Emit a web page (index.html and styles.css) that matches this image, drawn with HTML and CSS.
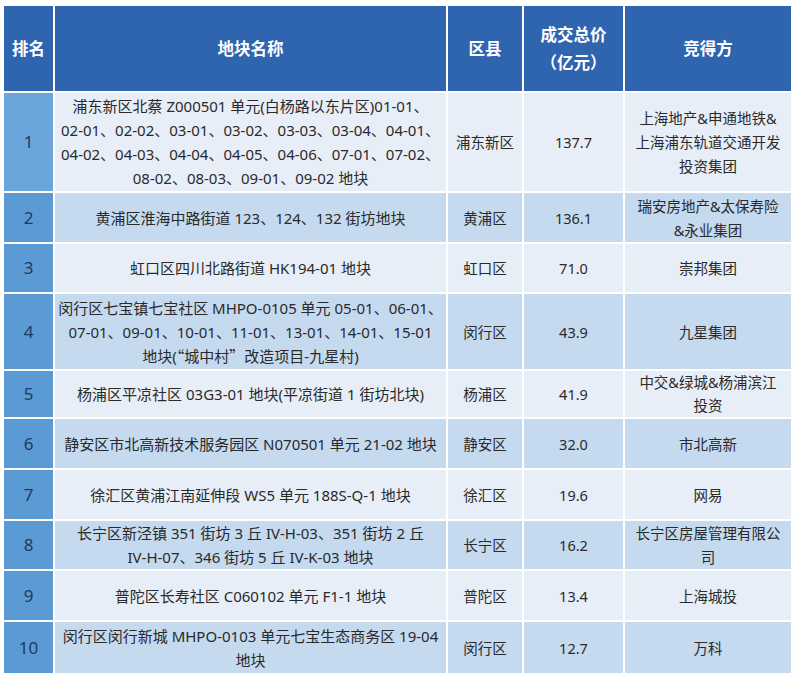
FILE: index.html
```html
<!DOCTYPE html>
<html lang="zh">
<head>
<meta charset="utf-8">
<link rel="stylesheet" href="styles.css">
</head>
<body>
<table class="land">
  <colgroup>
    <col class="c-rank"><col class="c-name"><col class="c-dist"><col class="c-price"><col class="c-win">
  </colgroup>
  <thead>
    <tr class="head">
      <th class="h-rank">排名</th>
      <th>地块名称</th>
      <th>区县</th>
      <th>成交总价<br>（亿元）</th>
      <th>竞得方</th>
    </tr>
  </thead>
  <tbody>
    <tr class="odd r1">
      <td class="rank">1</td>
      <td class="name">浦东新区北蔡 Z000501 单元(白杨路以东片区)01-01、<br>02-01、02-02、03-01、03-02、03-03、03-04、04-01、<br>04-02、04-03、04-04、04-05、04-06、07-01、07-02、<br>08-02、08-03、09-01、09-02 地块</td>
      <td>浦东新区</td>
      <td>137.7</td>
      <td>上海地产&amp;申通地铁&amp;<br>上海浦东轨道交通开发<br>投资集团</td>
    </tr>
    <tr class="even r2">
      <td class="rank">2</td>
      <td class="name">黄浦区淮海中路街道 123、124、132 街坊地块</td>
      <td>黄浦区</td>
      <td>136.1</td>
      <td>瑞安房地产&amp;太保寿险<br>&amp;永业集团</td>
    </tr>
    <tr class="odd r3">
      <td class="rank">3</td>
      <td class="name">虹口区四川北路街道 HK194-01 地块</td>
      <td>虹口区</td>
      <td>71.0</td>
      <td>崇邦集团</td>
    </tr>
    <tr class="even r4">
      <td class="rank">4</td>
      <td class="name">闵行区七宝镇七宝社区 MHPO-0105 单元 05-01、06-01、<br>07-01、09-01、10-01、11-01、13-01、14-01、15-01<br>地块(<span class="cjk">“</span>城中村<span class="cjk">”</span>改造项目-九星村)</td>
      <td>闵行区</td>
      <td>43.9</td>
      <td>九星集团</td>
    </tr>
    <tr class="odd r5">
      <td class="rank">5</td>
      <td class="name">杨浦区平凉社区 03G3-01 地块(平凉街道 1 街坊北块)</td>
      <td>杨浦区</td>
      <td>41.9</td>
      <td class="tight">中交&amp;绿城&amp;杨浦滨江<br>投资</td>
    </tr>
    <tr class="even r6">
      <td class="rank">6</td>
      <td class="name">静安区市北高新技术服务园区 N070501 单元 21-02 地块</td>
      <td>静安区</td>
      <td>32.0</td>
      <td>市北高新</td>
    </tr>
    <tr class="odd r7">
      <td class="rank">7</td>
      <td class="name">徐汇区黄浦江南延伸段 WS5 单元 188S-Q-1 地块</td>
      <td>徐汇区</td>
      <td>19.6</td>
      <td>网易</td>
    </tr>
    <tr class="even r8">
      <td class="rank">8</td>
      <td class="name">长宁区新泾镇 351 街坊 3 丘 IV-H-03、351 街坊 2 丘<br>IV-H-07、346 街坊 5 丘 IV-K-03 地块</td>
      <td>长宁区</td>
      <td>16.2</td>
      <td>长宁区房屋管理有限公<br>司</td>
    </tr>
    <tr class="odd r9">
      <td class="rank">9</td>
      <td class="name">普陀区长寿社区 C060102 单元 F1-1 地块</td>
      <td>普陀区</td>
      <td>13.4</td>
      <td>上海城投</td>
    </tr>
    <tr class="even r10">
      <td class="rank">10</td>
      <td class="name">闵行区闵行新城 MHPO-0103 单元七宝生态商务区 19-04<br>地块</td>
      <td>闵行区</td>
      <td>12.7</td>
      <td>万科</td>
    </tr>
  </tbody>
</table>
</body>
</html>
```
FILE: styles.css
```css
html, body {
  margin: 0;
  padding: 0;
  background: #ffffff;
}
body {
  font-family: "Noto Sans", "Noto Sans CJK SC", sans-serif;
  color: #2a2a2a;
}
.cjk {
  font-family: "Noto Sans CJK SC", sans-serif;
}
.land {
  margin: 6px 0 0 4px;
  width: 787px;
  table-layout: fixed;
  border-collapse: separate;
  border-spacing: 0;
}
.c-rank { width: 51px; }
.c-name { width: 393px; }
.c-dist { width: 76px; }
.c-price { width: 101px; }
.c-win { width: 166px; }

.land th, .land td {
  padding: 0;
  text-align: center;
  vertical-align: middle;
  white-space: nowrap;
  box-sizing: border-box;
  border-right: 2px solid #ffffff;
  border-bottom: 2px solid #ffffff;
}
.land th:last-child, .land td:last-child { border-right: 0; }
.land tr:last-child td { border-bottom: 0; }
.land td {
  font-size: 14.5px;
  line-height: 24px;
}
.land td.name {
  font-size: 15px;
}
.land td.tight {
  line-height: 23px;
}
.head {
  height: 87px;
  background: #2f64ae;
}
.land th {
  color: #ffffff;
  font-size: 16.5px;
  font-weight: 700;
  line-height: 28px;
}
.land .h-rank {
  text-align: left;
  padding-left: 8px;
}
.odd { background: #e8eef7; }
.even { background: #c5d9ef; }
.land td.rank {
  background: #5b9bd5;
  color: #1f3a5c;
  font-size: 17px;
}
.land .r1 td.rank { background: #6aa5dc; }
.r1 { height: 100px; }
.r2 { height: 51px; }
.r3 { height: 50px; }
.r4 { height: 77px; }
.r5 { height: 48px; }
.r6 { height: 51px; }
.r7 { height: 51px; }
.r8 { height: 50px; }
.r9 { height: 51px; }
.r10 { height: 51px; }
```
